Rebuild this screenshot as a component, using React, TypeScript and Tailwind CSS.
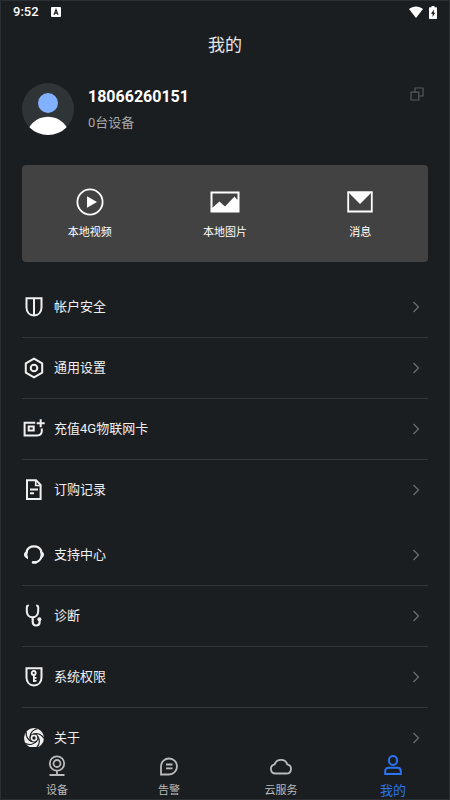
import type { ReactNode } from "react";

type IconProps = { className?: string };

function Svg({ children, className = "h-6 w-6" }: { children: ReactNode; className?: string }) {
  return (
    <svg
      viewBox="0 0 24 24"
      fill="none"
      stroke="currentColor"
      strokeWidth="2"
      aria-hidden="true"
      className={"shrink-0 " + className}
    >
      {children}
    </svg>
  );
}

const ShieldIcon = () => (
  <Svg>
    <path d="M4.500 3.200h15v9.300c0 4.600-3 7.700-7.500 8-4.500-.3-7.500-3.400-7.500-8z" />
    <path d="M12 3v17.500" />
  </Svg>
);

const HexIcon = () => (
  <Svg>
    <path d="M12 2.600l8.200 4.700v9.400L12 21.400l-8.200-4.700V7.300z" strokeLinejoin="round" />
    <circle cx="12" cy="12" r="3.300" />
  </Svg>
);

const SimIcon = () => (
  <Svg>
    <path d="M13.200 5.800H2.600v12.600h12.600c3 0 4.600-1.700 4.600-4.400v-2.600" />
    <path d="M6.700 9.400h5v4h-5z" />
    <path d="M18.700 2.200v8M14.700 6.200h8" />
  </Svg>
);

const DocIcon = () => (
  <Svg>
    <path d="M5 2.200h9l4.600 4.700v14H5z" />
    <path d="M13.700 2.500v5h4.700" strokeWidth="1.600" />
    <path d="M8 11.500h8M8 15.300h4" />
  </Svg>
);

const HeadsetIcon = () => (
  <Svg>
    <path d="M4.500 8.500a8 8 0 0 1 15 0M19.500 13.500c-.9 3.300-3 5.300-6.500 6" strokeWidth="2.200" />
    <path
      d="M6 7v9.200C3.800 15.300 1.900 13.600 1.900 11.600S3.800 7.900 6 7zM18 7v9.200c2.200-.9 4.100-2.600 4.100-4.600S20.200 7.900 18 7z"
      fill="currentColor"
      stroke="none"
    />
    <circle cx="12" cy="11.600" r="6.600" fill="#1b1e20" stroke="none" />
    <path d="M11.200 19.400h2.400" strokeWidth="2.800" strokeLinecap="round" />
  </Svg>
);

const StethoscopeIcon = () => (
  <Svg>
    <path d="M6.800 1.500c-1.500 0-2 .7-2 2V7c0 4 2.400 6.300 5.700 6.300S16.200 11 16.200 7V3.500c0-1.300-.5-2-2-2" />
    <path d="M10.700 13.300v4.200c0 2.500 1.200 4 3.300 4s3.600-1.500 3.600-3.800v-2" strokeWidth="2.200" />
    <circle cx="17.400" cy="15.300" r="2" fill="currentColor" stroke="none" />
  </Svg>
);

const KeyShieldIcon = () => (
  <Svg>
    <path d="M4.500 3.200h15v9.300c0 4.600-3 7.700-7.500 8-4.500-.3-7.500-3.400-7.500-8z" />
    <circle cx="11.700" cy="8" r="2" strokeWidth="1.800" />
    <path d="M11.900 10v7M11.900 12.800h2.600M11.900 15.900h2.600" strokeWidth="1.800" />
  </Svg>
);

const bladeAngles = [0, 72, 144, 216, 288];

const ApertureIcon = () => (
  <Svg>
    <circle cx="12" cy="12" r="10" fill="currentColor" stroke="none" />
    <g stroke="#1b1e20" strokeWidth="1.300">
      {bladeAngles.map((angle) => (
        <path key={angle} d="M11.500 8C15.500 6.800 19.800 8.500 22 12.500" transform={`rotate(${angle} 12 12)`} />
      ))}
      <circle cx="12" cy="12" r="4" strokeWidth="1.200" />
    </g>
    <circle cx="12" cy="12" r="1.700" fill="#1b1e20" stroke="none" />
  </Svg>
);

const PlayIcon = () => (
  <svg viewBox="0 0 28 28" className="h-7 w-7" fill="none" aria-hidden="true">
    <circle cx="14" cy="14" r="12.600" stroke="currentColor" strokeWidth="1.800" />
    <path d="M11 8.300v11.400L21 14z" fill="currentColor" />
  </svg>
);

const PictureIcon = () => (
  <svg viewBox="0 0 30 28" className="h-7 w-[30px]" fill="none" aria-hidden="true">
    <path d="M1.500 4.500h27v19h-27z" stroke="currentColor" strokeWidth="2" />
    <path d="M2 20l7.500-6.500 5.500 5L24.500 8.500l2.500 3h1.500V24H2z" fill="currentColor" />
  </svg>
);

const MessageIcon = () => (
  <svg viewBox="0 0 28 28" className="h-7 w-7" fill="none" aria-hidden="true">
    <path d="M2.200 4.200h23.600v19.300H2.200z" stroke="currentColor" strokeWidth="1.800" />
    <path d="M2.500 4.500h23L14 16z" fill="currentColor" />
  </svg>
);

const CameraIcon = () => (
  <Svg>
    <g strokeWidth="1.800">
      <circle cx="12" cy="9.500" r="7.200" />
      <circle cx="12" cy="9.500" r="3.500" />
      <path d="M12 16.500v4.500M4.500 21h15" />
    </g>
  </Svg>
);

const AlarmIcon = () => (
  <Svg>
    <g strokeWidth="1.800">
      <path d="M4 20.500v-8.300a8 8 0 1 1 8 8.300z" />
      <path d="M9 10.500h6.500M9 14.300h6.500" />
    </g>
  </Svg>
);

const CloudIcon = () => (
  <Svg>
    <path
      d="M6.500 19.500a4.600 4.600 0 0 1-.9-9.100C6.600 7.500 9 5.900 12 5.900s5.400 1.600 6.300 4.500a4.600 4.600 0 0 1-.8 9.100z"
      strokeWidth="1.800"
    />
  </Svg>
);

const PersonIcon = () => (
  <Svg>
    <rect x="8" y="2" width="8" height="9" rx="4" />
    <path d="M4.200 20v-2.800c0-2.200 1.300-3.400 3.500-3.400h8.600c2.200 0 3.500 1.200 3.500 3.400V20z" />
  </Svg>
);

function Chevron({ className = "" }: IconProps) {
  return (
    <svg
      viewBox="0 0 8 12"
      fill="none"
      stroke="currentColor"
      strokeWidth="1.200"
      aria-hidden="true"
      className={"h-3 w-2 " + className}
    >
      <path d="M1.500 1l5 5-5 5" />
    </svg>
  );
}

type Item = { label: string; icon: ReactNode };

const accountItems: Item[] = [
  { label: "帐户安全", icon: <ShieldIcon /> },
  { label: "通用设置", icon: <HexIcon /> },
  { label: "充值4G物联网卡", icon: <SimIcon /> },
  { label: "订购记录", icon: <DocIcon /> },
];

const supportItems: Item[] = [
  { label: "支持中心", icon: <HeadsetIcon /> },
  { label: "诊断", icon: <StethoscopeIcon /> },
  { label: "系统权限", icon: <KeyShieldIcon /> },
  { label: "关于", icon: <ApertureIcon /> },
];

const shortcuts: Item[] = [
  { label: "本地视频", icon: <PlayIcon /> },
  { label: "本地图片", icon: <PictureIcon /> },
  { label: "消息", icon: <MessageIcon /> },
];

const tabs: Item[] = [
  { label: "设备", icon: <CameraIcon /> },
  { label: "告警", icon: <AlarmIcon /> },
  { label: "云服务", icon: <CloudIcon /> },
  { label: "我的", icon: <PersonIcon /> },
];

function Menu({ items }: { items: Item[] }) {
  return (
    <ul className="divide-y divide-[#34373a]">
      {items.map((item) => (
        <li key={item.label}>
          <button type="button" className="flex h-[60px] w-full items-center gap-2 pr-2 text-left text-[#f0f0f0]">
            {item.icon}
            <span className="flex-1 text-[13px] leading-5">{item.label}</span>
            <Chevron className="text-[#6d7072]" />
          </button>
        </li>
      ))}
    </ul>
  );
}

function StatusBar() {
  return (
    <div className="flex h-[22px] items-center justify-between px-3 text-white">
      <div className="flex items-center gap-3">
        <span className="text-[13px] leading-4 font-medium">9:52</span>
        <svg viewBox="0 0 10 10" className="h-[10px] w-[10px]" aria-hidden="true">
          <rect width="10" height="10" rx="1" fill="#fff" />
          <path d="M3 7.800L5 2.600l2 5.200M3.700 6.200h2.600" stroke="#1b1e20" strokeWidth="1.200" fill="none" />
        </svg>
      </div>
      <div className="flex items-center gap-[6px]">
        <svg viewBox="0 0 14 12" className="h-3 w-[14px]" aria-hidden="true">
          <path d="M0 3C4-.4 10-.4 14 3L7 12z" fill="#fff" />
        </svg>
        <svg viewBox="0 0 8 13" className="h-[13px] w-2" aria-hidden="true">
          <path d="M2.500 0h3v1.300H7c.6 0 1 .4 1 1V12c0 .6-.4 1-1 1H1c-.6 0-1-.4-1-1V2.300c0-.6.4-1 1-1h1.500z" fill="#fff" />
          <path d="M4.800 3.500L2 7.700h1.600v3.200L6.200 6.700H4.800z" fill="#1b1e20" />
        </svg>
      </div>
    </div>
  );
}

export default function App() {
  return (
    <div className="flex h-screen flex-col border border-[#2b2f32] bg-[#1b1e20] font-['Roboto','Noto_Sans_CJK_SC',sans-serif] text-[#e6e6e6]">
      <StatusBar />
      <header className="flex h-11 items-center justify-center">
        <h1 className="text-[17px] leading-6">我的</h1>
      </header>

      <main className="min-h-0 flex-1 overflow-y-auto px-[21px] [scrollbar-width:none]">
        <section className="flex items-start pt-4">
          <svg viewBox="0 0 52 52" className="h-[52px] w-[52px] shrink-0" role="img" aria-label="头像">
            <clipPath id="avatar">
              <circle cx="26" cy="26" r="26" />
            </clipPath>
            <g clipPath="url(#avatar)">
              <rect width="52" height="52" fill="#2f3437" />
              <circle cx="26" cy="20" r="10" fill="#82b1ff" />
              <circle cx="26" cy="55.500" r="21.800" fill="#fff" />
            </g>
          </svg>
          <div className="ml-[14px] flex-1 pt-[2px]">
            <p className="text-base leading-6 font-bold text-white">18066260151</p>
            <p className="mt-1 text-[13px] leading-5 text-[#a6a7a8]">0台设备</p>
          </div>
          <button type="button" aria-label="复制" className="mt-1 mr-1 text-[#56595b]">
            <svg viewBox="0 0 14 14" className="h-[14px] w-[14px]" fill="none" stroke="currentColor" strokeWidth="1.200">
              <path d="M1 5.200h7.800V13H1z" />
              <path d="M5 5V1h8v8H9" />
            </svg>
          </button>
        </section>

        <section className="mt-[30px] grid grid-cols-3 rounded-sm bg-[#424242] pt-[23px] pb-5 text-white">
          {shortcuts.map((item) => (
            <button type="button" key={item.label} className="flex flex-col items-center gap-2">
              {item.icon}
              <span className="text-[11px] leading-[18px]">{item.label}</span>
            </button>
          ))}
        </section>

        <div className="flex flex-col gap-[5px] pt-[15px]">
          <Menu items={accountItems} />
          <Menu items={supportItems} />
        </div>
      </main>

      <nav className="grid h-[52px] shrink-0 grid-cols-4">
        {tabs.map((tab) => {
          const active = tab.label === "我的";
          return (
            <a
              key={tab.label}
              href="#"
              aria-current={active ? "page" : undefined}
              className={
                "flex flex-col items-center gap-[5px] pt-[7px] " + (active ? "text-[#2b73f0]" : "text-[#b9babb]")
              }
            >
              {tab.icon}
              <span className={active ? "text-[13px] leading-4" : "text-[11px] leading-4"}>{tab.label}</span>
            </a>
          );
        })}
      </nav>
    </div>
  );
}
